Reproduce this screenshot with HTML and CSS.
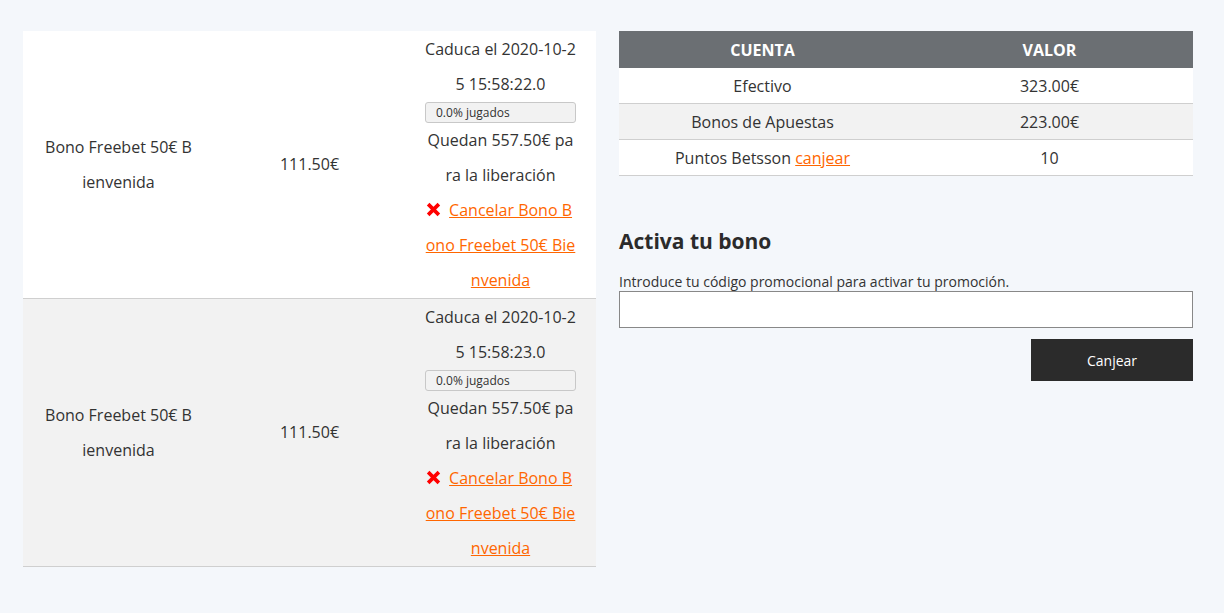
FILE: index.html
```html
<!DOCTYPE html>
<html lang="es">
<head>
<meta charset="utf-8">
<link rel="stylesheet" href="styles.css">
</head>
<body>
<div class="page">
  <table class="bonus-table">
    <tr class="row">
      <td class="name">Bono Freebet 50€ Bienvenida</td>
      <td>111.50€</td>
      <td>
        <div>Caduca el 2020-10-25 15:58:22.0</div>
        <div class="progress">0.0% jugados</div>
        <div>Quedan 557.50€ para la liberación</div>
        <div><svg class="xicon" viewBox="0 0 14 14"><path d="M2 2L12 12M12 2L2 12" stroke="#f00" stroke-width="3.4" stroke-linecap="butt"/></svg> <a href="#">Cancelar Bono Bono Freebet 50€ Bienvenida</a></div>
      </td>
    </tr>
    <tr class="row alt">
      <td class="name">Bono Freebet 50€ Bienvenida</td>
      <td>111.50€</td>
      <td>
        <div>Caduca el 2020-10-25 15:58:23.0</div>
        <div class="progress">0.0% jugados</div>
        <div>Quedan 557.50€ para la liberación</div>
        <div><svg class="xicon" viewBox="0 0 14 14"><path d="M2 2L12 12M12 2L2 12" stroke="#f00" stroke-width="3.4" stroke-linecap="butt"/></svg> <a href="#">Cancelar Bono Bono Freebet 50€ Bienvenida</a></div>
      </td>
    </tr>
  </table>

  <div class="side">
    <table class="account-table">
      <thead>
        <tr><th>CUENTA</th><th>VALOR</th></tr>
      </thead>
      <tbody>
        <tr><td>Efectivo</td><td>323.00€</td></tr>
        <tr class="alt"><td>Bonos de Apuestas</td><td>223.00€</td></tr>
        <tr><td>Puntos Betsson <a href="#">canjear</a></td><td>10</td></tr>
      </tbody>
    </table>

    <h2 class="title">Activa tu bono</h2>
    <p class="desc">Introduce tu código promocional para activar tu promoción.</p>
    <input class="code" type="text">
    <div class="actions"><button class="btn">Canjear</button></div>
  </div>
</div>
</body>
</html>
```

FILE: styles.css
```css
html, body {
  margin: 0;
  padding: 0;
  background: #f4f7fb;
  font-family: "Open Sans", "Noto Sans", sans-serif;
  color: #333;
}
a {
  color: #ff6600;
  text-decoration: underline;
}
.page {
  display: flex;
  align-items: flex-start;
  gap: 23px;
  padding: 31px 23px;
}
.bonus-table {
  width: 573px;
  border-collapse: collapse;
  table-layout: fixed;
  font-size: 16px;
  line-height: 35px;
}
.bonus-table td {
  width: 151px;
  padding: 0 20px;
  text-align: center;
  vertical-align: middle;
  word-break: break-all;
}
.bonus-table td.name {
  width: 147px;
  padding: 0 22px;
}
.bonus-table td > div:first-child {
  padding-top: 1px;
}
.row {
  background: #fff;
  border-bottom: 1px solid #cfcfcf;
}
.row.alt {
  background: #f2f2f2;
}
.progress {
  height: 19px;
  line-height: 19px;
  border: 1px solid #c8c8c8;
  border-radius: 3px;
  background: #f2f2f2;
  font-size: 12px;
  text-align: left;
  padding-left: 10px;
}
.xicon {
  width: 15px;
  height: 15px;
  vertical-align: -1px;
  margin-left: -3px;
  margin-right: 4px;
}
.side {
  width: 574px;
}
.account-table {
  width: 100%;
  border-collapse: collapse;
  table-layout: fixed;
  font-size: 16px;
}
.account-table th {
  background: #6b6f73;
  color: #fff;
  font-weight: 700;
  height: 37px;
  padding: 0;
  text-align: center;
}
.account-table td {
  height: 35px;
  padding: 0;
  text-align: center;
  background: #fff;
  border-bottom: 1px solid #cfcfcf;
}
.account-table tr.alt td {
  background: #f2f2f2;
}
.title {
  margin: 51px 0 0;
  font-size: 21px;
  line-height: 28px;
  font-weight: 700;
  color: #2b2b2b;
}
.desc {
  margin: 18px 0 0;
  font-size: 14px;
  line-height: 18px;
}
.code {
  display: block;
  box-sizing: border-box;
  width: 100%;
  height: 37px;
  margin: 0;
  border: 1px solid #888;
  background: #fff;
  font-family: inherit;
}
.actions {
  display: flex;
  justify-content: flex-end;
  margin-top: 11px;
}
.btn {
  width: 162px;
  height: 42px;
  border: 0;
  background: #2b2b2b;
  color: #fff;
  font-family: inherit;
  font-size: 14px;
}
```
